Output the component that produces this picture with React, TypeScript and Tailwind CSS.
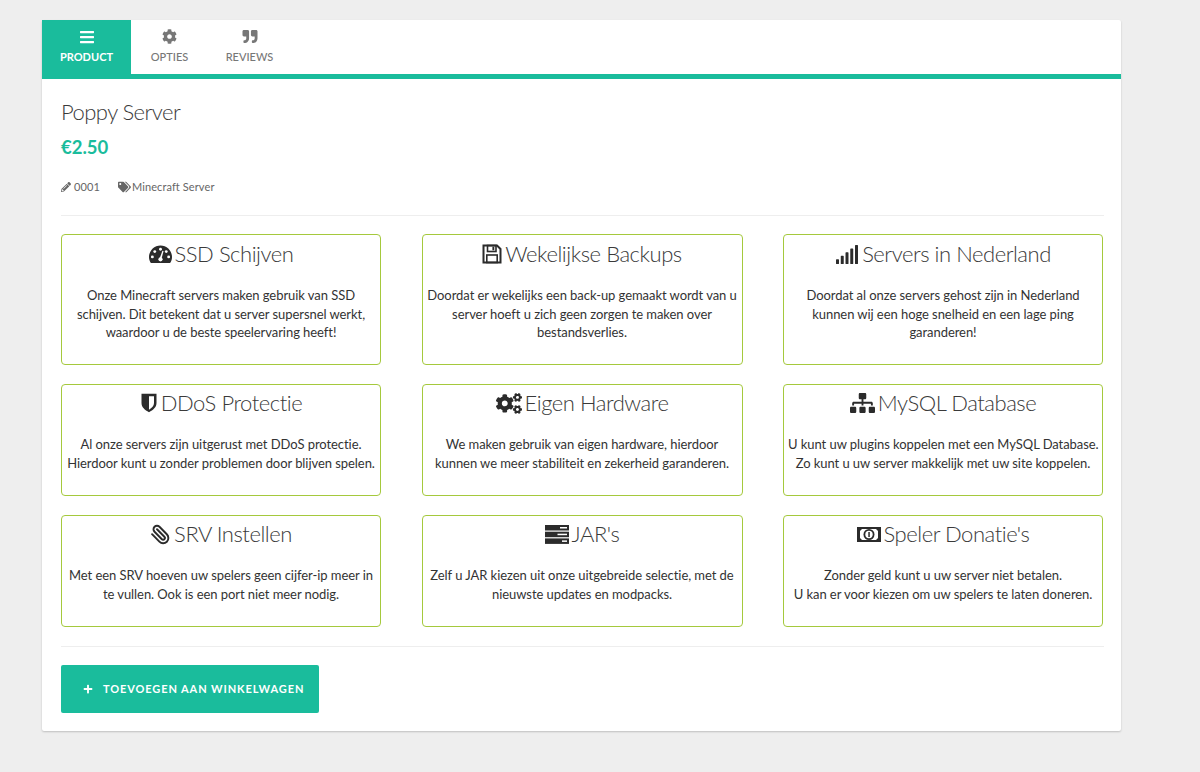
import type { ReactNode } from "react";
import { Paperclip } from "lucide-react";
import {
  FaBars,
  FaCog,
  FaCogs,
  FaPencilAlt,
  FaPlus,
  FaQuoteRight,
  FaSignal,
  FaSitemap,
  FaTags,
} from "react-icons/fa";

const GaugeIcon = () => (
  <svg viewBox="0 0 24 20" className="h-[20px] w-[23px]">
    <path fill="currentColor" d="M12 1C5.400 1 0 6.400 0 13c0 2.400.7 4.600 2 6.500h20c1.300-1.900 2-4.100 2-6.500 0-6.600-5.400-12-12-12z" />
    <g fill="#fff">
      <circle cx="3.500" cy="13" r="1.500" />
      <circle cx="6" cy="7.500" r="1.500" />
      <circle cx="12" cy="5" r="1.500" />
      <circle cx="18" cy="7.500" r="1.500" />
      <circle cx="20.500" cy="13" r="1.500" />
      <circle cx="12" cy="15.500" r="2.200" />
      <path d="M11 15l3-8.500 1.200.4-2.300 8.700z" />
    </g>
  </svg>
);

const FloppyIcon = () => (
  <svg viewBox="0 0 20 20" className="h-[20px] w-[20px]" fill="none" stroke="currentColor">
    <path strokeWidth="2" d="M1.500 1.500h13.500l3.500 3.500v13.500h-17z" />
    <rect x="5.500" y="1.500" width="8.500" height="6" strokeWidth="1.600" />
    <rect x="4.800" y="11" width="10.400" height="7.500" strokeWidth="1.600" />
    <rect x="10.800" y="3" width="1.200" height="3" fill="currentColor" strokeWidth="0.600" />
  </svg>
);

const ShieldIcon = () => (
  <svg viewBox="0 0 20 24" className="h-[20px] w-[18px]" fill="currentColor">
    <path d="M1 1h18v11c0 5-4 8.500-9 11C5 20.500 1 17 1 12V1zm9 3v16c3.500-2 6-4.500 6-8V4h-6z" />
  </svg>
);

const ServerIcon = () => (
  <svg viewBox="0 0 24 19" className="h-[19px] w-[24px]" fill="currentColor">
    <rect y="0" width="24" height="5.500" />
    <rect y="6.700" width="24" height="5.500" />
    <rect y="13.400" width="24" height="5.500" />
    <g fill="#fff">
      <rect x="15" y="2" width="7" height="1.500" />
      <rect x="12.500" y="8.700" width="9.500" height="1.500" />
      <rect x="17" y="15.400" width="5" height="1.500" />
    </g>
  </svg>
);

const MoneyIcon = () => (
  <svg viewBox="0 0 24 15" className="h-[15px] w-[24px]" fill="currentColor">
    <rect width="24" height="15" />
    <path fill="#fff" d="M5 2h14l2 2v7l-2 2H5l-2-2V4z" />
    <circle cx="12" cy="7.500" r="5.500" />
    <circle cx="12" cy="7.500" r="3.700" fill="#fff" />
    <rect x="11.300" y="5" width="1.500" height="5" />
  </svg>
);

type Feature = { icon: ReactNode; title: string; lines: string[] };

const features: Feature[] = [
  {
    icon: <GaugeIcon />,
    title: "SSD Schijven",
    lines: ["Onze Minecraft servers maken gebruik van SSD", "schijven. Dit betekent dat u server supersnel werkt,", "waardoor u de beste speelervaring heeft!"],
  },
  {
    icon: <FloppyIcon />,
    title: "Wekelijkse Backups",
    lines: ["Doordat er wekelijks een back-up gemaakt wordt van u", "server hoeft u zich geen zorgen te maken over", "bestandsverlies."],
  },
  {
    icon: <FaSignal className="h-[19px] w-[24px]" />,
    title: "Servers in Nederland",
    lines: ["Doordat al onze servers gehost zijn in Nederland", "kunnen wij een hoge snelheid en een lage ping", "garanderen!"],
  },
  {
    icon: <ShieldIcon />,
    title: "DDoS Protectie",
    lines: ["Al onze servers zijn uitgerust met DDoS protectie.", "Hierdoor kunt u zonder problemen door blijven spelen."],
  },
  {
    icon: <FaCogs className="h-[21px] w-[26px]" />,
    title: "Eigen Hardware",
    lines: ["We maken gebruik van eigen hardware, hierdoor", "kunnen we meer stabiliteit en zekerheid garanderen."],
  },
  {
    icon: <FaSitemap className="h-[20px] w-[25px]" />,
    title: "MySQL Database",
    lines: ["U kunt uw plugins koppelen met een MySQL Database.", "Zo kunt u uw server makkelijk met uw site koppelen."],
  },
  {
    icon: <Paperclip className="h-[21px] w-[21px] -scale-x-100" strokeWidth={2.2} />,
    title: "SRV Instellen",
    lines: ["Met een SRV hoeven uw spelers geen cijfer-ip meer in", "te vullen. Ook is een port niet meer nodig."],
  },
  {
    icon: <ServerIcon />,
    title: "JAR's",
    lines: ["Zelf u JAR kiezen uit onze uitgebreide selectie, met de", "nieuwste updates en modpacks."],
  },
  {
    icon: <MoneyIcon />,
    title: "Speler Donatie's",
    lines: ["Zonder geld kunt u uw server niet betalen.", "U kan er voor kiezen om uw spelers te laten doneren."],
  },
];

const App = () => {
  return (
    <div className="min-h-[772px] bg-[#eeeeee] pt-[20px] pl-[42px] pr-[79px] font-['Lato','Open_Sans',sans-serif]">
      <div className="rounded-[2px] bg-white shadow-[0_1px_2px_rgba(0,0,0,0.2)]">
        <div className="flex h-[59px] border-b-[5px] border-[#1abc9c]">
          <div className="flex h-[59px] w-[89px] flex-col items-center bg-[#1abc9c] pt-[9px] text-white">
            <FaBars className="h-[16px] w-[16px]" />
            <span className="mt-[5px] text-[11px] leading-[14px] font-bold">PRODUCT</span>
          </div>
          <div className="flex w-[77px] flex-col items-center pt-[9px] text-[#777777]">
            <FaCog className="h-[15px] w-[15px]" />
            <span className="mt-[6px] text-[11px] leading-[14px] font-medium">OPTIES</span>
          </div>
          <div className="flex w-[83px] flex-col items-center pt-[9px] text-[#777777]">
            <FaQuoteRight className="h-[15px] w-[16px]" />
            <span className="mt-[6px] text-[11px] leading-[14px] font-medium">REVIEWS</span>
          </div>
        </div>

        <div className="pt-[19px] pr-[17px] pb-[18px] pl-[19px]">
          <h1 className="text-[22px] leading-[28px] font-light tracking-[-0.55px] text-[#3a3a3a]">Poppy Server</h1>
          <div className="mt-[9px] text-[18.500px] leading-[24px] font-bold text-[#1abc9c]">€2.50</div>
          <div className="mt-[21px] flex h-[14px] items-center text-[11px] tracking-[0.1px] text-[#666666]">
            <FaPencilAlt className="h-[10px] w-[10px]" />
            <span className="ml-[3px]">0001</span>
            <FaTags className="ml-[18px] h-[12px] w-[13px]" />
            <span className="ml-[1px]">Minecraft Server</span>
          </div>
          <hr className="mt-[21px] border-t border-[#eeeeee]" />

          <div className="mt-[18px] grid grid-cols-[320px_321px_320px] gap-x-[40.500px] gap-y-[19px]">
            {features.map((f, i) => (
              <div
                key={f.title}
                className={`rounded-[4px] border border-[#a5c93d] px-[4px] text-center ${i < 3 ? "h-[131px] pt-[6px]" : "h-[112px] pt-[5px]"}`}
              >
                <div className="flex h-[26px] items-center justify-center gap-[3px] text-[#3a3a3a]">
                  <span className="flex text-[#2b2b2b]">{f.icon}</span>
                  <span className="text-[22px] leading-[26px] font-light tracking-[-0.46px] whitespace-nowrap">{f.title}</span>
                </div>
                <div className="mt-[19px] text-[13px] leading-[18.500px] tracking-[-0.06px] text-[#333333]">
                  {f.lines.map((line) => (
                    <div key={line} className="whitespace-nowrap">{line}</div>
                  ))}
                </div>
              </div>
            ))}
          </div>

          <hr className="mt-[19px] border-t border-[#eeeeee]" />
          <button className="mt-[18px] flex h-[48px] w-[258px] items-center rounded-[2px] bg-[#1abc9c] pl-[22px] text-[11px] font-bold tracking-[0.9px] text-white">
            <FaPlus className="h-[10px] w-[10px]" />
            <span className="ml-[10px]">TOEVOEGEN AAN WINKELWAGEN</span>
          </button>
        </div>
      </div>
    </div>
  );
};

export default App;
